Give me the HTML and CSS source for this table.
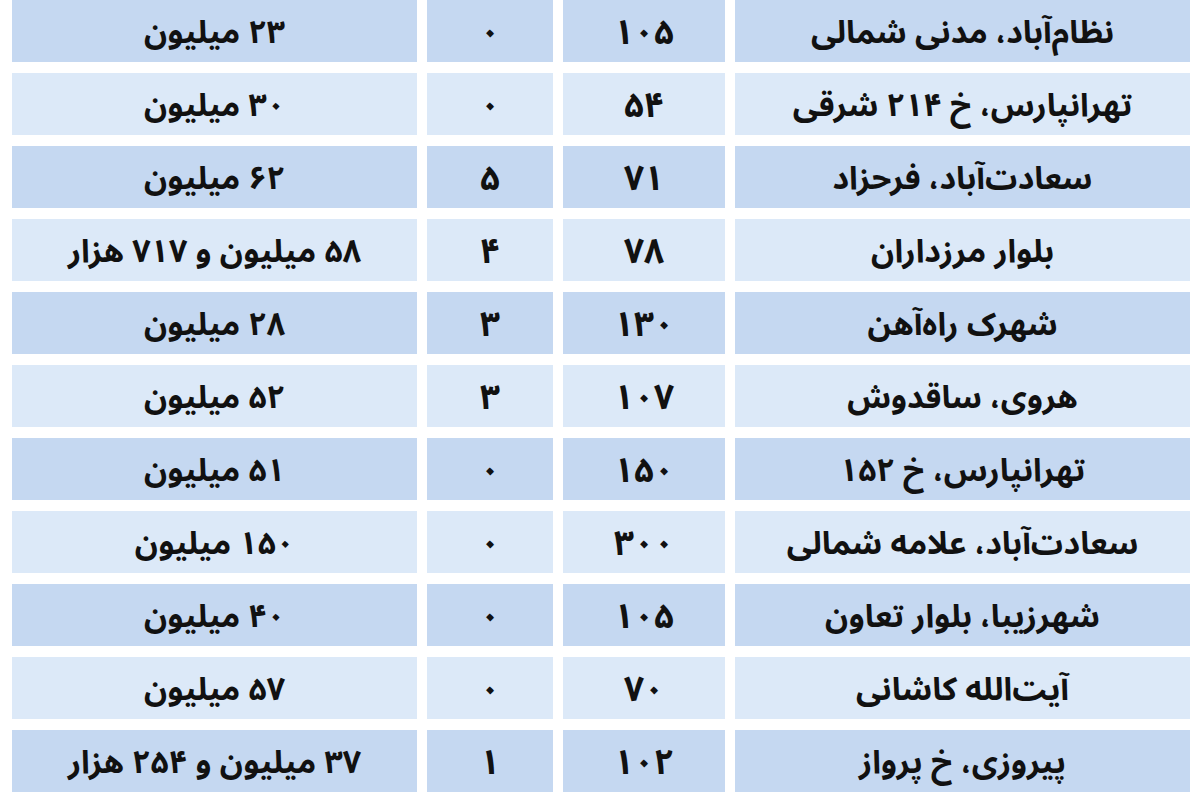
FILE: index.html
```html
<!DOCTYPE html>
<html lang="fa" dir="rtl">
<head>
<meta charset="utf-8">
<title>جدول</title>
<link rel="stylesheet" href="styles.css">
</head>
<body>
<div class="table">
  <div class="row dark"><div class="cell">نظام‌آباد، مدنی شمالی</div><div class="cell num">۱۰۵</div><div class="cell num">۰</div><div class="cell">۲۳ میلیون</div></div>
  <div class="row light"><div class="cell">تهرانپارس، خ ۲۱۴ شرقی</div><div class="cell num">۵۴</div><div class="cell num">۰</div><div class="cell">۳۰ میلیون</div></div>
  <div class="row dark"><div class="cell">سعادت‌آباد، فرحزاد</div><div class="cell num">۷۱</div><div class="cell num">۵</div><div class="cell">۶۲ میلیون</div></div>
  <div class="row light"><div class="cell">بلوار مرزداران</div><div class="cell num">۷۸</div><div class="cell num">۴</div><div class="cell">۵۸ میلیون و ۷۱۷ هزار</div></div>
  <div class="row dark"><div class="cell">شهرک راه‌آهن</div><div class="cell num">۱۳۰</div><div class="cell num">۳</div><div class="cell">۲۸ میلیون</div></div>
  <div class="row light"><div class="cell">هروی، ساقدوش</div><div class="cell num">۱۰۷</div><div class="cell num">۳</div><div class="cell">۵۲ میلیون</div></div>
  <div class="row dark"><div class="cell">تهرانپارس، خ ۱۵۲</div><div class="cell num">۱۵۰</div><div class="cell num">۰</div><div class="cell">۵۱ میلیون</div></div>
  <div class="row light"><div class="cell">سعادت‌آباد، علامه شمالی</div><div class="cell num">۳۰۰</div><div class="cell num">۰</div><div class="cell">۱۵۰ میلیون</div></div>
  <div class="row dark"><div class="cell">شهرزیبا، بلوار تعاون</div><div class="cell num">۱۰۵</div><div class="cell num">۰</div><div class="cell">۴۰ میلیون</div></div>
  <div class="row light"><div class="cell">آیت‌الله کاشانی</div><div class="cell num">۷۰</div><div class="cell num">۰</div><div class="cell">۵۷ میلیون</div></div>
  <div class="row dark"><div class="cell">پیروزی، خ پرواز</div><div class="cell num">۱۰۲</div><div class="cell num">۱</div><div class="cell">۳۷ میلیون و ۲۵۴ هزار</div></div>
</div>
</body>
</html>
```
FILE: styles.css
```css
html, body {
  margin: 0;
  padding: 0;
  background: #ffffff;
}
body {
  padding: 0 10px 0 12px;
  font-family: "Noto Sans Arabic", "DejaVu Sans", sans-serif;
  color: #111111;
}
.table {
  display: flex;
  flex-direction: column;
  gap: 11px;
}
.row {
  display: grid;
  grid-template-columns: 455px 162px 126px 405px;
  grid-template-rows: 62px;
  column-gap: 10px;
  height: 62px;
}
.cell {
  box-sizing: border-box;
  min-height: 0;
  display: flex;
  align-items: center;
  justify-content: center;
  padding-top: 4px;
  font-size: 32px;
  line-height: 40px;
  font-weight: 700;
  white-space: nowrap;
  overflow: visible;
}
.num {
  font-size: 35px;
  letter-spacing: 2px;
}
.dark .cell {
  background: #c5d8f1;
}
.light .cell {
  background: #dce9f8;
}
```
